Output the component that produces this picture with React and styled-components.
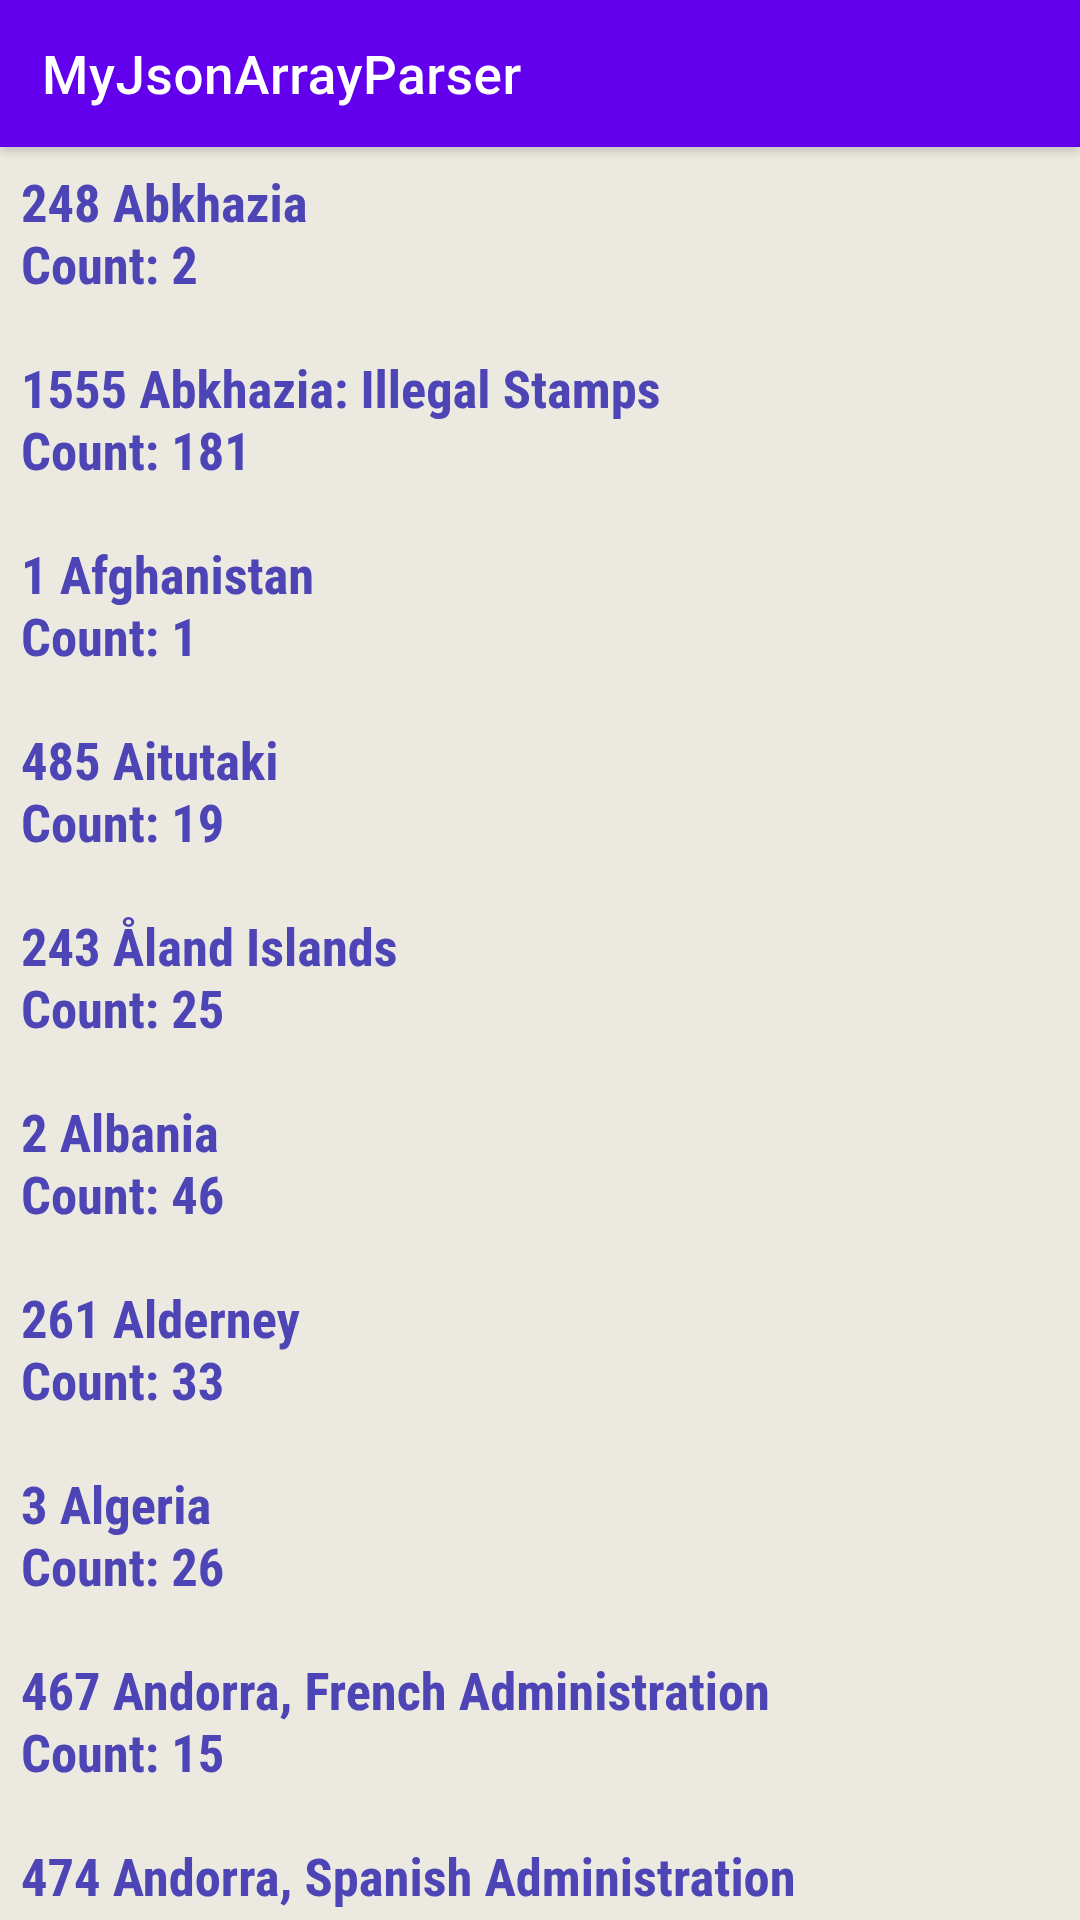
import React from 'react';
import styled, { createGlobalStyle } from 'styled-components';

const GlobalStyle = createGlobalStyle`
  html, body {
    margin: 0;
    padding: 0;
    background: #eceae0;
  }
  #root {
    min-height: 1920px;
  }
`;

const Screen = styled.div`
  width: 1080px;
  height: 1920px;
  overflow: hidden;
  background: #eceae0;
  display: flex;
  flex-direction: column;
`;

const Toolbar = styled.header`
  height: 147px;
  box-sizing: border-box;
  flex-shrink: 0;
  background: #6200ee;
  display: flex;
  align-items: center;
  padding: 5px 42px 0;
  box-shadow: 0 4px 10px rgba(0, 0, 0, 0.18);
  position: relative;
  z-index: 1;

  h1 {
    margin: 0;
    color: #ffffff;
    font-family: Roboto, 'Noto Sans', sans-serif;
    font-weight: 500;
    font-size: 53px;
    letter-spacing: 0.6px;
  }
`;

const List = styled.div`
  padding: 26px 21px 0;
`;

const Entry = styled.div`
  font-family: 'Roboto Condensed', Roboto, 'Liberation Sans Narrow', sans-serif;
  font-stretch: condensed;
  font-weight: 700;
  font-size: 52.5px;
  line-height: 62px;
  color: #4d44b6;
  padding-bottom: 62px;
  white-space: nowrap;
`;

const countries = [
  { id: 248, name: 'Abkhazia', count: 2 },
  { id: 1555, name: 'Abkhazia: Illegal Stamps', count: 181 },
  { id: 1, name: 'Afghanistan', count: 1 },
  { id: 485, name: 'Aitutaki', count: 19 },
  { id: 243, name: 'Åland Islands', count: 25 },
  { id: 2, name: 'Albania', count: 46 },
  { id: 261, name: 'Alderney', count: 33 },
  { id: 3, name: 'Algeria', count: 26 },
  { id: 467, name: 'Andorra, French Administration', count: 15 },
  { id: 474, name: 'Andorra, Spanish Administration', count: 12 },
];

const App = () => {
  return (
    <Screen>
      <GlobalStyle />
      <Toolbar>
        <h1>MyJsonArrayParser</h1>
      </Toolbar>
      <List>
        {countries.map((c) => (
          <Entry key={c.id}>
            <div>
              {c.id} {c.name}
            </div>
            <div>Count: {c.count}</div>
          </Entry>
        ))}
      </List>
    </Screen>
  );
};

export default App;
